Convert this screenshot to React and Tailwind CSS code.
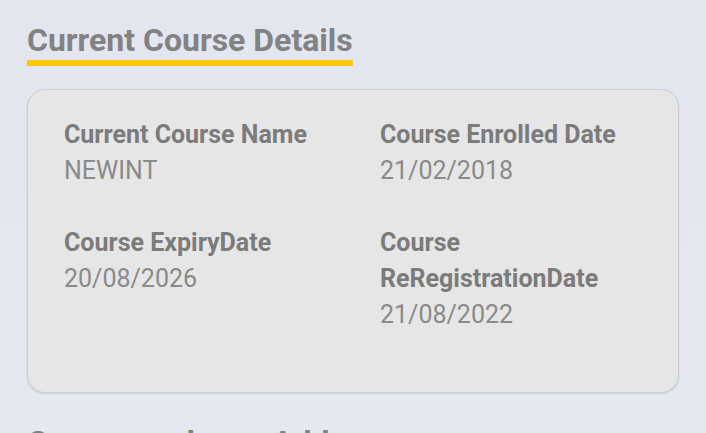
import React from "react";

const details = [
  { label: "Current Course Name", value: "NEWINT" },
  { label: "Course Enrolled Date", value: "21/02/2018" },
  { label: "Course ExpiryDate", value: "20/08/2026" },
  { label: "Course ReRegistrationDate", value: "21/08/2022" },
];

const DetailItem = ({ label, value }) => {
  return (
    <div className="flex flex-col">
      <span className="text-[25px] leading-[36px] font-bold text-[#7b7b7b]">{label}</span>
      <span className="text-[25px] leading-[36px] text-[#8a8a8a]">{value}</span>
    </div>
  );
};

const App = () => {
  return (
    <div
      className="w-[706px] h-[433px] overflow-hidden bg-gradient-to-b from-[#e3e5ef] to-[#e6e8f1] px-[27px] pt-[21px]"
      style={{ fontFamily: "Roboto, 'Liberation Sans', sans-serif" }}
    >
      <h2 className="inline-block text-[32px] leading-[39px] font-bold text-[#828282] border-b-[6px] border-[#fdc70c]">
        Current Course Details
      </h2>

      {/* course info card */}
      <div className="mt-[23px] w-[652px] h-[304px] rounded-[18px] border border-[#cfcfcf] bg-[#e6e6e6] shadow-[0_1px_2px_rgba(0,0,0,0.12)] px-[36px] pt-[27px]">
        <div className="grid grid-cols-[262px_262px] gap-x-[54px] gap-y-[36px]">
          {details.map((d) => (
            <DetailItem key={d.label} label={d.label} value={d.value} />
          ))}
        </div>
      </div>

      <h2 className="mt-[30px] text-[32px] leading-[39px] font-bold text-[#828282] whitespace-nowrap">
        Correspondence Address
      </h2>
    </div>
  );
};

export default App;
